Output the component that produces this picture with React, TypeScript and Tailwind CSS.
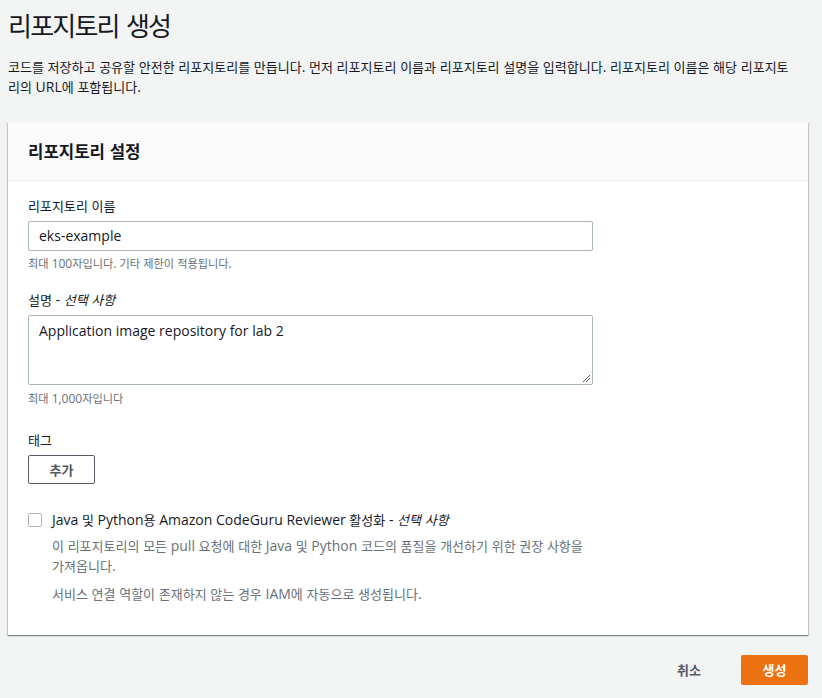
import React from "react";

const font = { fontFamily: '"Open Sans", "Noto Sans CJK KR", sans-serif' };

function K({ t, tight }: { t: string; tight?: boolean }) {
  const parts = t.split(/([\uAC00-\uD7A3]+)/);
  return (
    <>
      {parts.map((s, i) =>
        /[\uAC00-\uD7A3]/.test(s) ? (
          <span
            key={i}
            className={tight ? "text-[0.93em] tracking-[-0.07em]" : "text-[0.93em]"}
          >
            {s}
          </span>
        ) : (
          <React.Fragment key={i}>{s}</React.Fragment>
        )
      )}
    </>
  );
}

export default function App() {
  return (
    <div
      className="min-h-[698px] w-[822px] bg-[#f2f3f3] px-2 text-[#16191f]"
      style={font}
    >
      <h1 className="pt-[7px] text-[28px] leading-[36px] font-normal text-[#16191f]">
        <K t="리포지토리 생성" tight />
      </h1>
      <p className="mt-[13px] text-[14px] leading-[20px] text-[#16191f]">
        <span className="block whitespace-nowrap">
          <K t="코드를 저장하고 공유할 안전한 리포지토리를 만듭니다. 먼저 리포지토리 이름과 리포지토리 설명을 입력합니다. 리포지토리 이름은 해당 리포지토" />
        </span>
        <span className="block whitespace-nowrap">
          <K t="리의 URL에 포함됩니다." />
        </span>
      </p>

      <div className="mt-[25px] w-[800px] bg-white shadow-[0_1px_1px_0_rgba(0,28,36,0.3),1px_1px_1px_0_rgba(0,28,36,0.15),-1px_1px_1px_0_rgba(0,28,36,0.15)]">
        <div className="flex h-[59px] items-center border-b border-[#eaeded] bg-[#fafafa] px-5">
          <h2 className="text-[18px] leading-[24px] font-bold text-[#16191f]">
            <K t="리포지토리 설정" />
          </h2>
        </div>
        <div className="px-5 pt-[14px] pb-[31px]">
          <div className="text-[14px] leading-[22px]">
            <K t="리포지토리 이름" />
          </div>
          <div className="mt-[4px] flex h-[30px] w-[565px] items-center rounded-[2px] border border-[#aab7b8] px-[10px] text-[14px] leading-[20px]">
            eks-example
          </div>
          <div className="mt-[5px] text-[12px] leading-[16px] text-[#687078]">
            <K t="최대 100자입니다. 기타 제한이 적용됩니다." />
          </div>

          <div className="mt-[17px] text-[14px] leading-[22px]">
            <K t="설명 - " />
            <span className="italic">
              <K t="선택 사항" />
            </span>
          </div>
          <div className="relative mt-[4px] h-[70px] w-[565px] rounded-[2px] border border-[#aab7b8] px-[10px] pt-[4px] text-[14px] leading-[22px]">
            Application image repository for lab 2
            <svg className="absolute right-[1px] bottom-[1px]" width="10" height="10" viewBox="0 0 10 10">
              <path d="M9 2 L2 9 M9 5 L5 9" stroke="#555" strokeWidth="1" />
            </svg>
          </div>
          <div className="mt-[6px] text-[12px] leading-[16px] text-[#687078]">
            <K t="최대 1,000자입니다" />
          </div>

          <div className="mt-[22px] text-[14px] leading-[22px]">
            <K t="태그" />
          </div>
          <button className="mt-[4px] flex h-[29px] w-[67px] items-center justify-center rounded-[2px] border border-[#545b64] bg-white text-[14px] leading-[20px] font-bold text-[#545b64]">
            <K t="추가" />
          </button>

          <div className="mt-[28px] flex">
            <div className="mt-[1px] h-[14px] w-[14px] shrink-0 rounded-[2px] border border-[#aab7b8] bg-white" />
            <div className="ml-[10px]">
              <div className="text-[14px] leading-[16px]">
                <K t="Java 및 Python용 Amazon CodeGuru Reviewer 활성화 - " />
                <span className="italic">
                  <K t="선택 사항" />
                </span>
              </div>
              <div className="mt-[8px] text-[14px] leading-[19px] text-[#687078]">
                <span className="block whitespace-nowrap">
                  <K t="이 리포지토리의 모든 pull 요청에 대한 Java 및 Python 코드의 품질을 개선하기 위한 권장 사항을" />
                </span>
                <span className="block whitespace-nowrap">
                  <K t="가져옵니다." />
                </span>
              </div>
              <div className="mt-[8px] text-[14px] leading-[19px] text-[#687078]">
                <K t="서비스 연결 역할이 존재하지 않는 경우 IAM에 자동으로 생성됩니다." />
              </div>
            </div>
          </div>
        </div>
      </div>

      <div className="mt-[20px] flex w-[800px] items-center justify-end">
        <button className="mr-[20px] px-[20px] text-[14px] leading-[20px] font-bold text-[#545b64]">
          <K t="취소" />
        </button>
        <button className="flex h-[30px] w-[67px] items-center justify-center rounded-[2px] bg-[#ec7211] text-[14px] leading-[20px] font-bold text-white">
          <K t="생성" />
        </button>
      </div>
    </div>
  );
}
